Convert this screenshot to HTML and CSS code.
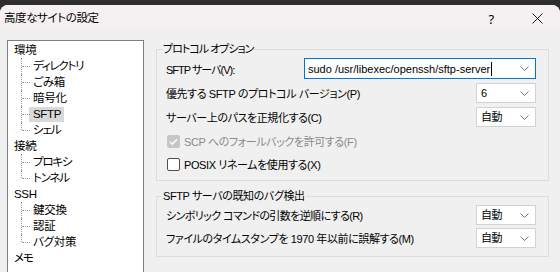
FILE: index.html
```html
<!DOCTYPE html>
<html lang="ja">
<head>
<meta charset="utf-8">
<title>高度なサイトの設定</title>
<link rel="stylesheet" href="styles.css">
</head>
<body>
<div class="window">
  <div class="titlebar">
    <span class="title">高度なサイトの設定</span>
    <div class="caption-buttons">
      <span class="cap-btn help">?</span>
      <span class="cap-btn close">
        <svg width="11" height="11" viewBox="0 0 11 11"><path d="M0.5 0.5 L10.5 10.5 M10.5 0.5 L0.5 10.5" stroke="#1a1a1a" stroke-width="1" fill="none"/></svg>
      </span>
    </div>
  </div>
  <div class="content">
    <div class="tree">
      <ul class="root">
        <li><span class="node">環境</span>
          <ul class="children">
            <li><span class="node kana">ディレクトリ</span></li>
            <li><span class="node">ごみ箱</span></li>
            <li><span class="node">暗号化</span></li>
            <li><span class="node selected">SFTP</span></li>
            <li><span class="node kana">シェル</span></li>
          </ul>
        </li>
        <li><span class="node">接続</span>
          <ul class="children">
            <li><span class="node kana">プロキシ</span></li>
            <li><span class="node kana">トンネル</span></li>
          </ul>
        </li>
        <li><span class="node">SSH</span>
          <ul class="children">
            <li><span class="node">鍵交換</span></li>
            <li><span class="node">認証</span></li>
            <li><span class="node">バグ対策</span></li>
          </ul>
        </li>
        <li><span class="node kana">メモ</span></li>
      </ul>
    </div>
    <div class="panel">
      <fieldset class="group group-options">
        <legend class="tight">プロトコル オプション</legend>
        <div class="row row-server">
          <label class="tight">SFTP サーバ(V):</label>
          <div class="combo combo-edit">
            <span class="combo-text latin">sudo /usr/libexec/openssh/sftp-server<span class="caret"></span></span>
            <svg class="chev" width="9" height="5" viewBox="0 0 9 5"><path d="M0.5 0.5 L4.5 4.5 L8.5 0.5" stroke="#707070" stroke-width="1" fill="none"/></svg>
          </div>
        </div>
        <div class="row row-select">
          <label>優先する SFTP のプロトコル バージョン(P)</label>
          <div class="combo combo-small">
            <span class="combo-text">6</span>
            <svg class="chev" width="9" height="5" viewBox="0 0 9 5"><path d="M0.5 0.5 L4.5 4.5 L8.5 0.5" stroke="#707070" stroke-width="1" fill="none"/></svg>
          </div>
        </div>
        <div class="row row-select">
          <label>サーバー上のパスを正規化する(C)</label>
          <div class="combo combo-small">
            <span class="combo-text">自動</span>
            <svg class="chev" width="9" height="5" viewBox="0 0 9 5"><path d="M0.5 0.5 L4.5 4.5 L8.5 0.5" stroke="#707070" stroke-width="1" fill="none"/></svg>
          </div>
        </div>
        <div class="check disabled check-first">
          <span class="box">
            <svg width="13" height="13" viewBox="0 0 13 13"><path d="M3 6.8 L5.4 9.2 L10 4.2" stroke="#ffffff" stroke-width="1.4" fill="none"/></svg>
          </span>
          <span class="check-label">SCP へのフォールバックを許可する(F)</span>
        </div>
        <div class="check">
          <span class="box"></span>
          <span class="check-label">POSIX リネームを使用する(X)</span>
        </div>
      </fieldset>
      <fieldset class="group group-bugs">
        <legend>SFTP サーバの既知のバグ検出</legend>
        <div class="row row-select">
          <label class="semi">シンボリック コマンドの引数を逆順にする(R)</label>
          <div class="combo combo-small">
            <span class="combo-text">自動</span>
            <svg class="chev" width="9" height="5" viewBox="0 0 9 5"><path d="M0.5 0.5 L4.5 4.5 L8.5 0.5" stroke="#707070" stroke-width="1" fill="none"/></svg>
          </div>
        </div>
        <div class="row row-select">
          <label>ファイルのタイムスタンプを 1970 年以前に誤解する(M)</label>
          <div class="combo combo-small">
            <span class="combo-text">自動</span>
            <svg class="chev" width="9" height="5" viewBox="0 0 9 5"><path d="M0.5 0.5 L4.5 4.5 L8.5 0.5" stroke="#707070" stroke-width="1" fill="none"/></svg>
          </div>
        </div>
      </fieldset>
    </div>
  </div>
</div>
</body>
</html>
```

FILE: styles.css
```css
* { box-sizing: border-box; }

html, body {
  margin: 0;
  padding: 0;
  width: 560px;
  height: 272px;
  overflow: hidden;
  background: #2e2e2e;
}

body {
  padding-top: 5px;
  font-family: "Liberation Sans", "Noto Sans CJK JP", sans-serif;
  font-size: 11px;
  letter-spacing: -0.4px;
  font-feature-settings: "palt";
  color: #000;
}

.window {
  height: 267px;
  background: #f0f0f0;
  border-radius: 8px 8px 0 0;
  overflow: hidden;
}

.titlebar {
  height: 25px;
  background: #f5f1f3;
  display: flex;
  align-items: center;
  justify-content: space-between;
  padding-left: 4px;
}

.title {
  font-size: 11.5px;
  letter-spacing: -0.4px;
  line-height: 16px;
  margin-top: 1px;
}

.caption-buttons {
  display: flex;
  align-items: center;
  height: 100%;
}

.cap-btn {
  display: flex;
  align-items: center;
  justify-content: center;
  height: 100%;
}

.help {
  width: 46px;
  font-family: "Noto Sans", sans-serif;
  font-size: 13px;
  margin-top: 2px;
}

.close {
  width: 46px;
  margin-top: 2px;
}

.content {
  display: flex;
  padding: 10px 0 0 7px;
}

/* tree */
.tree {
  width: 137px;
  height: 240px;
  background: #fff;
  border: 1px solid #7f7f7f;
  padding: 1px 0 0 6px;
  font-size: 11.5px;
  letter-spacing: -0.3px;
}

.tree ul {
  list-style: none;
  margin: 0;
  padding: 0;
}

.tree li {
  line-height: 16px;
}

.node {
  display: inline-block;
  height: 16px;
  line-height: 16px;
}

.node.kana {
  letter-spacing: -1.2px;
}

.children li {
  position: relative;
  padding-left: 19px;
}

.children li::before {
  content: "";
  position: absolute;
  left: 7px;
  top: 0;
  height: 100%;
  border-left: 1px dotted #9a9a9a;
}

.children li:last-child::before {
  height: 8px;
}

.children li::after {
  content: "";
  position: absolute;
  left: 8px;
  top: 8px;
  width: 8px;
  border-top: 1px dotted #9a9a9a;
}

.node.selected {
  background: #d9d9d9;
  margin-left: -4px;
  padding: 0 3px 0 4px;
  height: 15px;
  line-height: 15px;
}

/* panel */
.panel {
  margin-left: 12px;
  width: 393px;
  display: flex;
  flex-direction: column;
}

.group {
  margin: 0;
  border: 1px solid #dcdcdc;
  padding: 0 12px 0 9px;
  min-width: 0;
}

.group legend {
  padding: 0 1px;
  margin-left: -4px;
  line-height: 16px;
  height: 16px;
}

.tight {
  letter-spacing: -1px;
}

.semi {
  letter-spacing: -0.6px;
}

.group-options {
  margin-top: 1px;
  padding-bottom: 8px;
}

.group-bugs {
  margin-top: 7px;
  padding-bottom: 8px;
}

.row {
  display: flex;
  align-items: center;
  justify-content: space-between;
}

.row-server {
  height: 21px;
  margin-top: 1px;
}

.row-select {
  height: 20px;
  margin-top: 4px;
}

.group-bugs .row-select:first-of-type {
  margin-top: 1px;
}

.group-bugs .row-select + .row-select {
  margin-top: 3px;
}

.combo {
  background: #fff;
  display: flex;
  align-items: center;
  justify-content: space-between;
  height: 100%;
}

.combo-edit {
  width: 232px;
  border: 1px solid #0078d4;
  padding: 0 6px 0 3px;
}

.combo-small {
  width: 60px;
  border: 1px solid #d2d2d2;
  padding: 0 6px 0 4px;
}

.combo-text {
  line-height: 16px;
  white-space: nowrap;
  display: flex;
  align-items: center;
}

.combo-text.latin {
  letter-spacing: 0;
}

.caret {
  display: inline-block;
  width: 1px;
  height: 14px;
  background: #000;
  margin-left: 1px;
}

.chev {
  flex: none;
}

.check {
  display: flex;
  align-items: center;
  height: 16px;
  margin-top: 7px;
}

.check-first {
  margin-top: 6px;
}

.box {
  width: 13px;
  height: 13px;
  border: 1px solid #505050;
  border-radius: 2px;
  background: #fff;
  margin-left: 1px;
  margin-right: 4px;
  display: flex;
}

.check.disabled .box {
  background: #c6c6c6;
  border-color: #c6c6c6;
}

.check.disabled .box svg {
  margin: -1px;
}

.check.disabled .check-label {
  color: #8a8a8a;
}
```
